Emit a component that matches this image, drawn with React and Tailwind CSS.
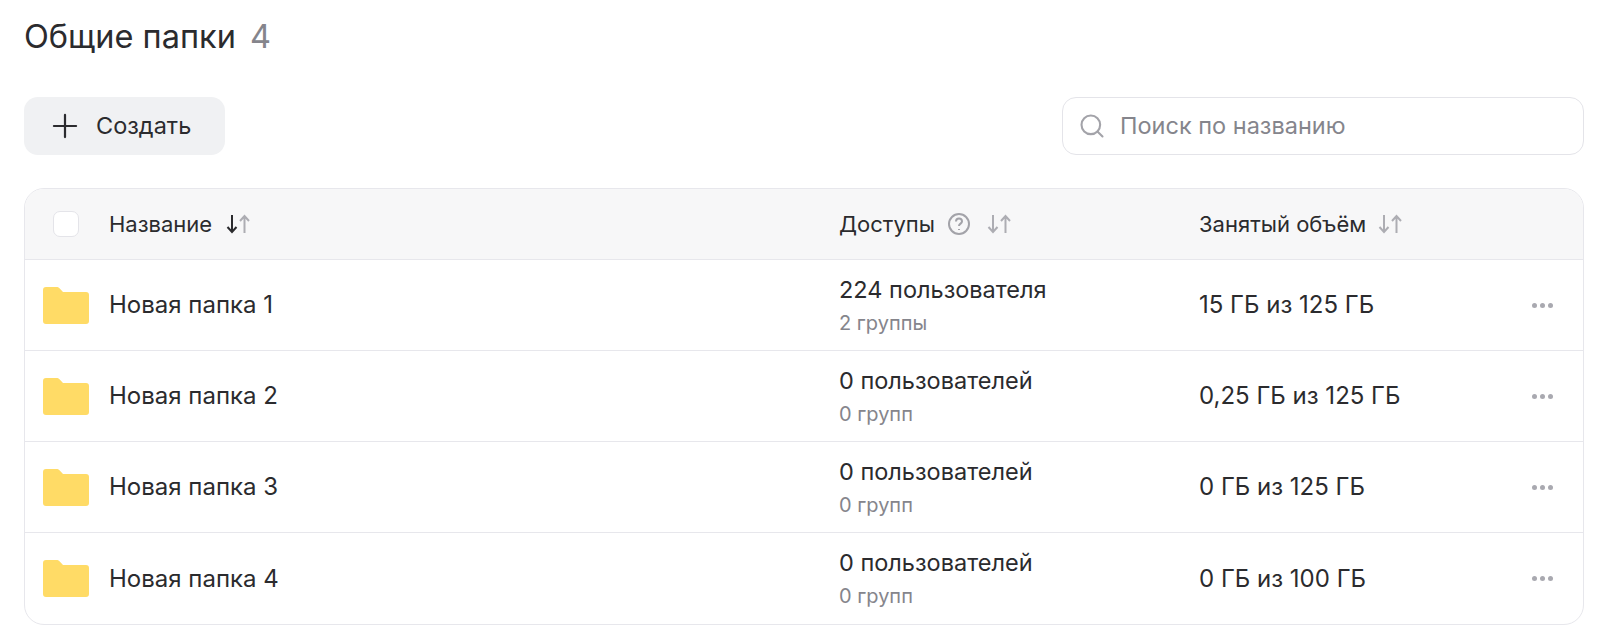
import { Plus, Search } from "lucide-react";

const folders = [
  { name: "Новая папка 1", users: "224 пользователя", groups: "2 группы", size: "15 ГБ из 125 ГБ" },
  { name: "Новая папка 2", users: "0 пользователей", groups: "0 групп", size: "0,25 ГБ из 125 ГБ" },
  { name: "Новая папка 3", users: "0 пользователей", groups: "0 групп", size: "0 ГБ из 125 ГБ" },
  { name: "Новая папка 4", users: "0 пользователей", groups: "0 групп", size: "0 ГБ из 100 ГБ" },
];

const SortIcon = ({ active }) => (
  <svg width="24" height="20" viewBox="0 0 24 20" fill="none" strokeWidth="2" className="shrink-0">
    <path d="M6 1v17M1.500 13l4.500 5 4.500-5" stroke={active ? "#2b2b2e" : "#adadb3"} />
    <path d="M18.500 19V2M14 7l4.500-5 4.500 5" stroke="#adadb3" />
  </svg>
);

const FolderIcon = () => (
  <svg width="46" height="37" viewBox="0 0 46 37" className="shrink-0">
    <path
      d="M0 3a3 3 0 0 1 3-3h10.500c1.200 0 2.200.5 3 1.300L20 5h23a3 3 0 0 1 3 3v26a3 3 0 0 1-3 3H3a3 3 0 0 1-3-3z"
      fill="#ffdb66"
    />
  </svg>
);

export default function App() {
  return (
    <div className="min-h-[637px] bg-white pl-6 pr-[17px] pt-[15px] font-['Inter',sans-serif] text-[#2b2b2e]">
      {/* TITLE */}
      <h1 className="flex h-11 items-center gap-[14px] text-[32.5px] font-normal">
        <span>Общие папки</span>
        <span className="text-[#85858c]">4</span>
      </h1>

      {/* TOOLBAR */}
      <div className="mt-[38px] flex items-center justify-between">
        <button className="flex h-[58px] w-[201px] items-center gap-[12px] rounded-[14px] bg-[#f0f1f3] pl-[22px] text-[23.5px]">
          <Plus size={38} strokeWidth={1.4} />
          <span>Создать</span>
        </button>
        <div className="flex h-[58px] w-[522px] items-center gap-[14px] rounded-[14px] border border-[#e4e4e9] pl-[15px] text-[23.5px] text-[#85858c]">
          <Search size={28} strokeWidth={1.8} className="text-[#a3a3a9]" />
          <span>Поиск по названию</span>
        </div>
      </div>

      {/* TABLE */}
      <div className="mt-[33px] overflow-hidden rounded-[20px] border border-[#e7e7ec] text-[24px]">
        <div className="flex h-[71px] items-center border-b border-[#e7e7ec] bg-[#f7f7f8] text-[22px]">
          <div className="flex w-[814px] items-center pl-[28px]">
            <div className="h-[26px] w-[26px] rounded-[7px] border border-[#e4e4e9] bg-white" />
            <span className="ml-[30px] mr-[14px]">Название</span>
            <SortIcon active />
          </div>
          <div className="flex w-[360px] items-center">
            <span className="mr-[12px]">Доступы</span>
            <svg width="24" height="24" viewBox="0 0 24 24" fill="none" stroke="#a3a3a9" strokeWidth="2">
              <circle cx="12" cy="12" r="10" />
              <path d="M9 9.500a3 3 0 0 1 6 0c0 2-3 2.300-3 4.500" />
              <path d="M12 17v1" />
            </svg>
            <span className="w-[16px]" />
            <SortIcon />
          </div>
          <div className="flex items-center gap-[12px]">
            <span>Занятый объём</span>
            <SortIcon />
          </div>
        </div>
        {folders.map((f) => (
          <div key={f.name} className="flex h-[91px] items-center border-b border-[#e7e7ec] last:border-b-0">
            <div className="flex w-[814px] items-center gap-5 pl-[18px]">
              <FolderIcon />
              <span>{f.name}</span>
            </div>
            <div className="w-[360px]">
              <div className="text-[23.5px] leading-7">{f.users}</div>
              <div className="mt-[7px] text-[20px] leading-6 text-[#85858c]">{f.groups}</div>
            </div>
            <div className="flex-1">{f.size}</div>
            <div className="mr-[30px] flex gap-[3px]">
              <span className="h-[5px] w-[5px] rounded-full bg-[#a9a9b0]" />
              <span className="h-[5px] w-[5px] rounded-full bg-[#a9a9b0]" />
              <span className="h-[5px] w-[5px] rounded-full bg-[#a9a9b0]" />
            </div>
          </div>
        ))}
      </div>
    </div>
  );
}
